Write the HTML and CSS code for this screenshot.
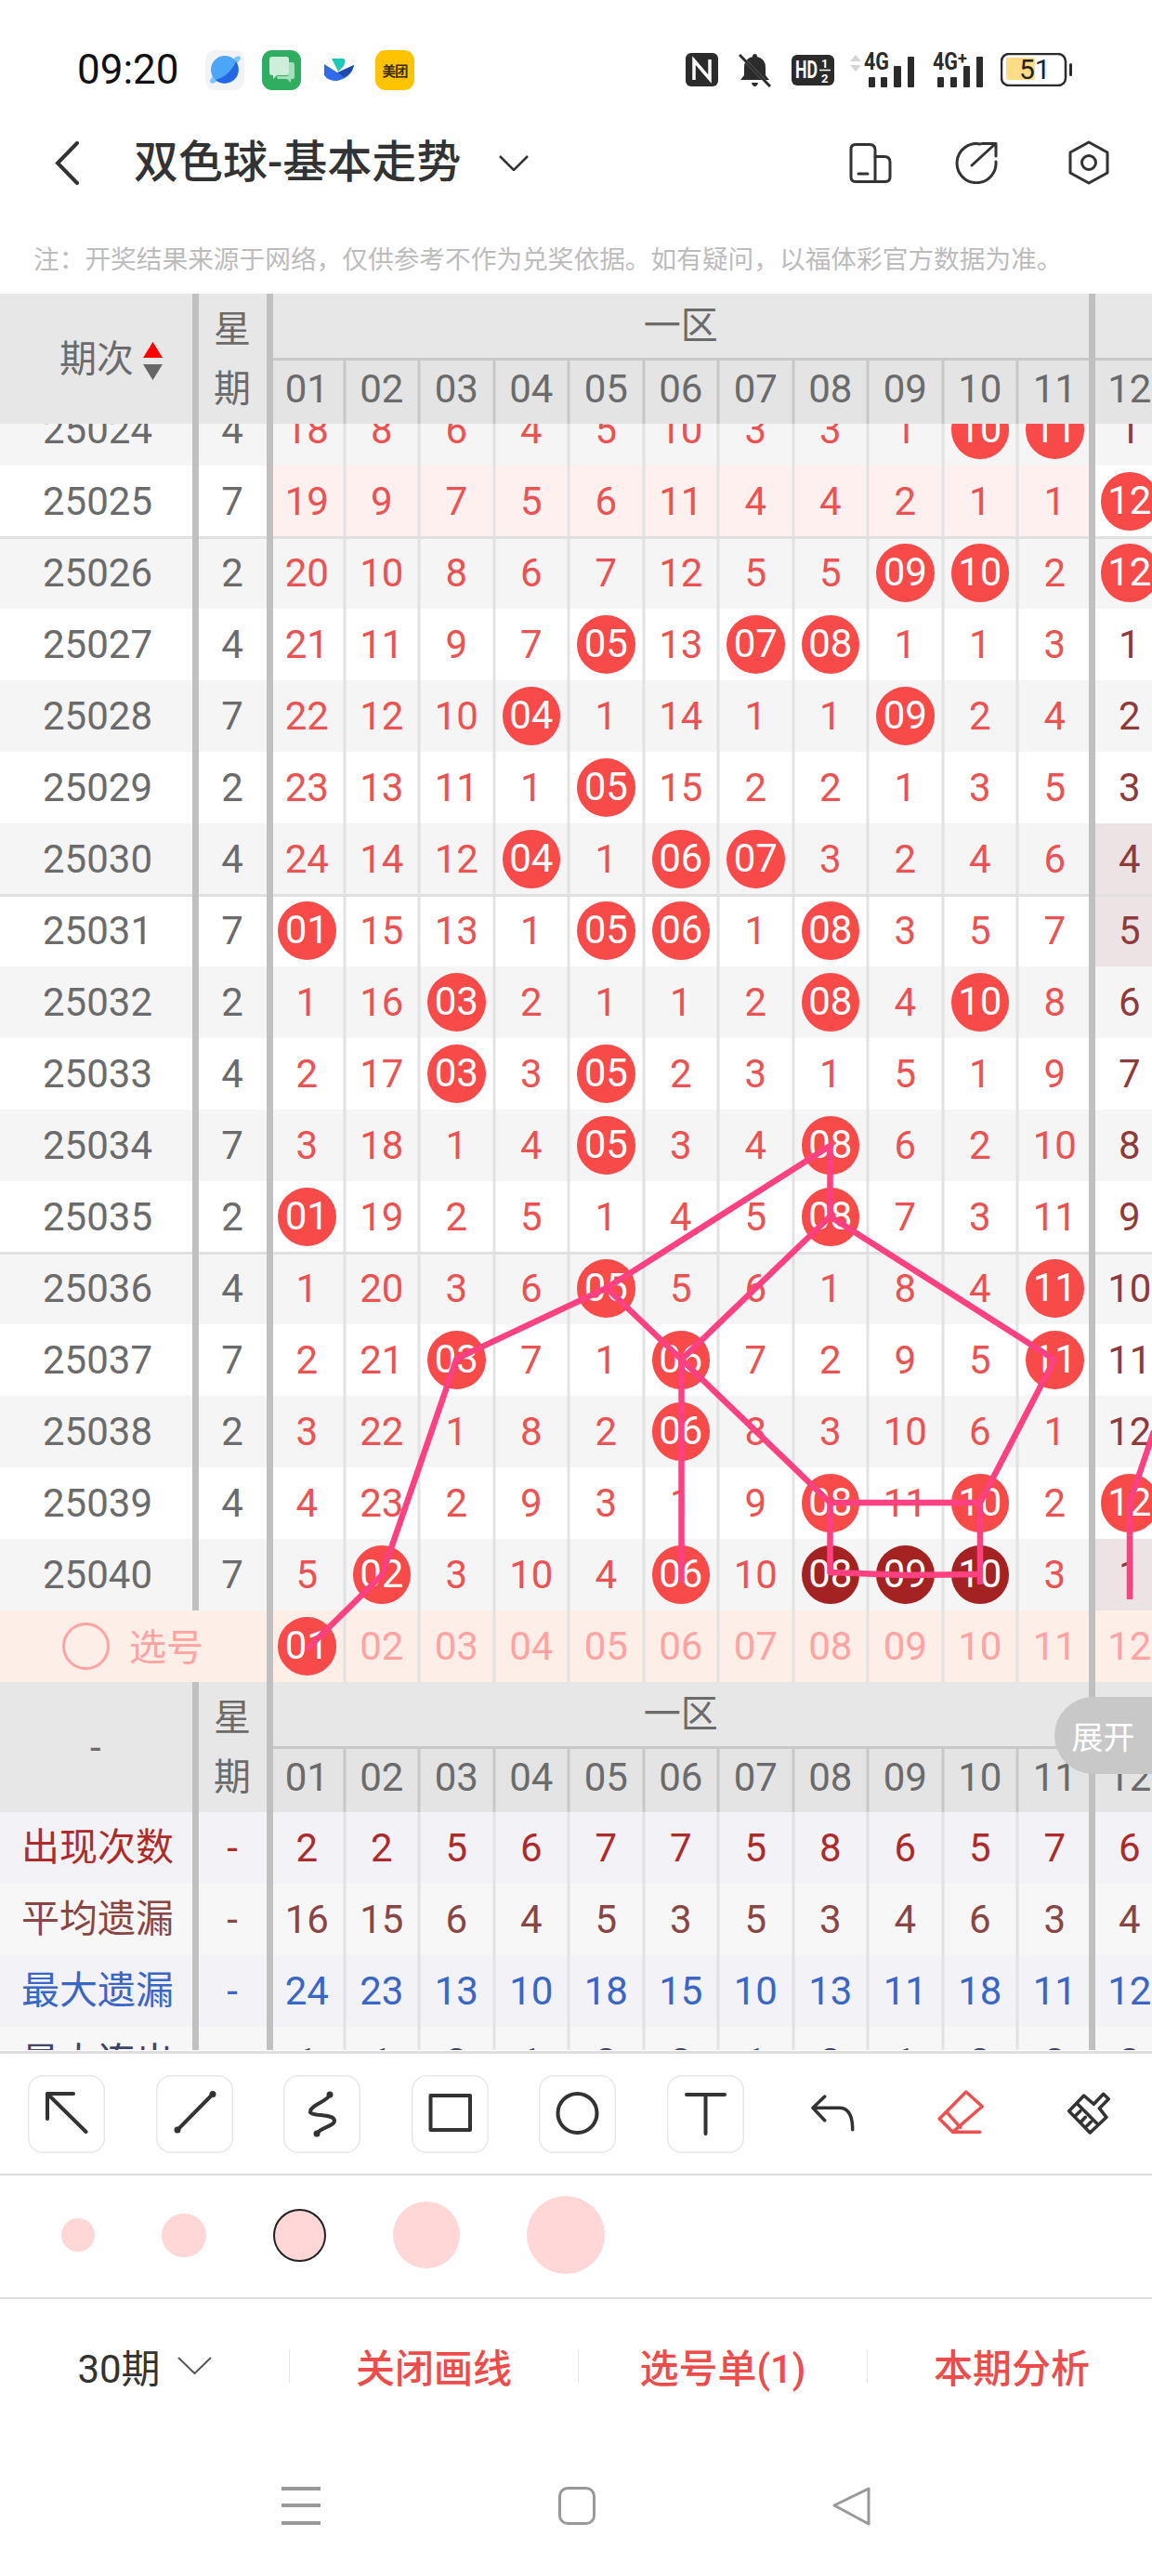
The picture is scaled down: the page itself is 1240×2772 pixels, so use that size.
FILE: index.html
```html
<!DOCTYPE html>
<html lang="zh">
<head>
<meta charset="utf-8">
<title>双色球-基本走势</title>
<link rel="stylesheet" href="styles.css">
</head>
<body>
<div class="status">
  <span class="time">09:20</span>
  <div class="apps">
    <svg class="app" viewBox="0 0 42 43"><rect width="42" height="43" rx="11" fill="#f3f3f6"/><path d="M6 35 Q3 33 9 27 L33 7 Q38 5 38 9 Q36 13 29 19 L13 33 Q8 37 6 35Z" fill="#7cc4fa"/><circle cx="21" cy="21" r="15" fill="#4da6f5"/><path d="M33 12 A15 15 0 0 1 11 32 Q26 28 33 12Z" fill="#2367e6"/></svg>
    <svg class="app" viewBox="0 0 42 43"><rect width="42" height="43" rx="11" fill="#2fae62"/><path d="M8 10 Q8 7 11 7 H26 Q29 7 29 10 V24 Q29 27 26 27 H16 L12 31 V27 H11 Q8 27 8 24Z" fill="#cdeeda"/><path d="M24 13 H32 Q35 13 35 16 V29 Q35 31 32 31 H31 V35 L27 31 H17 Q16 30 16 28 H26 Q29 28 29 24 V13Z" fill="#a3dfbb"/></svg>
    <svg class="bird" viewBox="0 0 32 24"><path d="M8 0 H20 Q24 0 21 8 L15 14 Z" fill="#1fc7b6"/><path d="M0 6 L14 15 L32 7 Q30 20 14 24 Q4 24 0 18Z" fill="#2f6bea"/><path d="M15 15 L32 7 Q30 16 21 20 Z" fill="#1d47a8"/></svg>
    <div class="meituan">美团</div>
  </div>
  <div class="sys">
    <svg class="nfc" viewBox="0 0 35 36"><rect width="35" height="36" rx="6" fill="#2b2b2b"/><path class="cut" d="M9 29 V8 L26 28 V7"/></svg>
    <svg class="bell" viewBox="0 0 35 38"><path d="M17.5 2 Q20 2 20 5 Q29 7 29 17 V25 L33 30 H2 L6 25 V17 Q6 7 15 5 Q15 2 17.5 2Z" fill="#2b2b2b"/><path d="M14 33 H21 Q20 37 17.5 37 Q15 37 14 33Z" fill="#2b2b2b"/><path class="slash-w" d="M3 5 L33 36"/><path class="slash" d="M1 3 L34 37"/></svg>
    <svg class="hd" viewBox="0 0 46 33"><rect width="46" height="33" rx="6" fill="#2b2b2b"/><text class="hd-t" x="4" y="25" textLength="24" lengthAdjust="spacingAndGlyphs">HD</text><text class="hd-s" x="32" y="14">1</text><path class="cut thin" d="M30 16.500 H42"/><text class="hd-s" x="32" y="30">2</text></svg>
    <svg class="sig" viewBox="0 0 69 37"><path d="M0 9 L6 2 L12 9Z" fill="#d6d6d6"/><path d="M0 13 H12 L6 20Z" fill="#d6d6d6"/><text class="sig-t" x="15" y="18" textLength="27" lengthAdjust="spacingAndGlyphs">4G</text><rect x="20" y="26" width="7" height="11" rx="1" fill="#2b2b2b"/><rect x="33" y="26" width="7" height="11" rx="1" fill="#2b2b2b"/><rect x="47" y="14" width="8" height="23" rx="1" fill="#2b2b2b"/><rect x="62" y="4" width="7" height="33" rx="1" fill="#2b2b2b"/></svg>
    <svg class="sig2" viewBox="0 0 54 37"><text class="sig-t" x="0" y="18" textLength="27" lengthAdjust="spacingAndGlyphs">4G</text><text class="sig-p" x="27" y="12">+</text><rect x="5" y="26" width="7" height="11" rx="1" fill="#2b2b2b"/><rect x="19" y="26" width="7" height="11" rx="1" fill="#2b2b2b"/><rect x="33" y="14" width="7" height="23" rx="1" fill="#2b2b2b"/><rect x="47" y="4" width="7" height="33" rx="1" fill="#2b2b2b"/></svg>
    <svg class="batt" viewBox="0 0 78 36"><rect x="1" y="1" width="69" height="34" rx="8" class="batt-o"/><rect x="6" y="5" width="31" height="24" rx="2" fill="#ffdc85"/><text class="batt-t" x="20" y="28">51</text><rect x="74" y="11" width="3" height="14" rx="1.500" fill="#2b2b2b"/></svg>
  </div>
</div>

<div class="appbar">
  <svg class="back" viewBox="0 0 26 47"><path d="M24 2 L3 23.500 L24 45"/></svg>
  <h1 class="title">双色球-基本走势</h1>
  <svg class="drop" viewBox="0 0 32 17"><path d="M1 1 L16 16 L31 1"/></svg>
  <div class="bar-icons">
    <svg class="ic-device" viewBox="0 0 46 43"><path d="M7 1.500 H22 Q28 1.500 28 7.500 V41.500 H7 Q2 41.500 2 36.500 V6.500 Q2 1.500 7 1.500Z"/><path d="M28 14.500 H38 Q44 14.500 44 20.500 V36.500 Q44 41.500 39 41.500 H28"/><path d="M10 33 H20"/></svg>
    <svg class="ic-share" viewBox="0 0 46 46"><path d="M27 3 A21 21 0 1 0 44 22"/><path d="M18 26 L43 3 M29 2.500 H44 V16"/></svg>
    <svg class="ic-gear" viewBox="0 0 44 48"><path d="M22 2 L42 13 V35 L22 46 L2 35 V13Z"/><circle cx="22" cy="24" r="7.500"/></svg>
  </div>
</div>

<p class="note">注&#xFF1A;开奖结果来源于网络&#xFF0C;仅供参考不作为兑奖依据。如有疑问&#xFF0C;以福体彩官方数据为准。</p>

<section class="board">
  <div class="head">
    <div class="h-id h-sort">期次<svg class="sort" viewBox="0 0 21 41"><path d="M10.500 0 L21 17 H0Z" fill="#f00"/><path d="M0 24 H21 L10.500 41Z" fill="#666"/></svg></div>
    <div class="h-wk">星<br>期</div>
    <div class="h-zone">一区</div>
    <div class="h-line"></div>
    <span class="h-n">01</span><span class="h-n">02</span><span class="h-n">03</span><span class="h-n">04</span><span class="h-n">05</span><span class="h-n">06</span><span class="h-n">07</span><span class="h-n">08</span><span class="h-n">09</span><span class="h-n">10</span><span class="h-n">11</span><span class="h-n h-last">12</span>
  </div>
  <div class="rows">
    <div class="row first"><span class="id">25024</span><span class="wk">4</span><span class="n">18</span><span class="n">8</span><span class="n">6</span><span class="n">4</span><span class="n">5</span><span class="n">10</span><span class="n">3</span><span class="n">3</span><span class="n">1</span><span class="n"><i class="ball">10</i></span><span class="n"><i class="ball">11</i></span><span class="n x">1</span></div>
    <div class="row sep hl"><span class="id">25025</span><span class="wk">7</span><span class="n">19</span><span class="n">9</span><span class="n">7</span><span class="n">5</span><span class="n">6</span><span class="n">11</span><span class="n">4</span><span class="n">4</span><span class="n">2</span><span class="n">1</span><span class="n">1</span><span class="n x"><i class="ball">12</i></span></div>
    <div class="row"><span class="id">25026</span><span class="wk">2</span><span class="n">20</span><span class="n">10</span><span class="n">8</span><span class="n">6</span><span class="n">7</span><span class="n">12</span><span class="n">5</span><span class="n">5</span><span class="n"><i class="ball">09</i></span><span class="n"><i class="ball">10</i></span><span class="n">2</span><span class="n x"><i class="ball">12</i></span></div>
    <div class="row"><span class="id">25027</span><span class="wk">4</span><span class="n">21</span><span class="n">11</span><span class="n">9</span><span class="n">7</span><span class="n"><i class="ball">05</i></span><span class="n">13</span><span class="n"><i class="ball">07</i></span><span class="n"><i class="ball">08</i></span><span class="n">1</span><span class="n">1</span><span class="n">3</span><span class="n x">1</span></div>
    <div class="row"><span class="id">25028</span><span class="wk">7</span><span class="n">22</span><span class="n">12</span><span class="n">10</span><span class="n"><i class="ball">04</i></span><span class="n">1</span><span class="n">14</span><span class="n">1</span><span class="n">1</span><span class="n"><i class="ball">09</i></span><span class="n">2</span><span class="n">4</span><span class="n x">2</span></div>
    <div class="row"><span class="id">25029</span><span class="wk">2</span><span class="n">23</span><span class="n">13</span><span class="n">11</span><span class="n">1</span><span class="n"><i class="ball">05</i></span><span class="n">15</span><span class="n">2</span><span class="n">2</span><span class="n">1</span><span class="n">3</span><span class="n">5</span><span class="n x">3</span></div>
    <div class="row sep"><span class="id">25030</span><span class="wk">4</span><span class="n">24</span><span class="n">14</span><span class="n">12</span><span class="n"><i class="ball">04</i></span><span class="n">1</span><span class="n"><i class="ball">06</i></span><span class="n"><i class="ball">07</i></span><span class="n">3</span><span class="n">2</span><span class="n">4</span><span class="n">6</span><span class="n x shade">4</span></div>
    <div class="row"><span class="id">25031</span><span class="wk">7</span><span class="n"><i class="ball">01</i></span><span class="n">15</span><span class="n">13</span><span class="n">1</span><span class="n"><i class="ball">05</i></span><span class="n"><i class="ball">06</i></span><span class="n">1</span><span class="n"><i class="ball">08</i></span><span class="n">3</span><span class="n">5</span><span class="n">7</span><span class="n x shade">5</span></div>
    <div class="row"><span class="id">25032</span><span class="wk">2</span><span class="n">1</span><span class="n">16</span><span class="n"><i class="ball">03</i></span><span class="n">2</span><span class="n">1</span><span class="n">1</span><span class="n">2</span><span class="n"><i class="ball">08</i></span><span class="n">4</span><span class="n"><i class="ball">10</i></span><span class="n">8</span><span class="n x">6</span></div>
    <div class="row"><span class="id">25033</span><span class="wk">4</span><span class="n">2</span><span class="n">17</span><span class="n"><i class="ball">03</i></span><span class="n">3</span><span class="n"><i class="ball">05</i></span><span class="n">2</span><span class="n">3</span><span class="n">1</span><span class="n">5</span><span class="n">1</span><span class="n">9</span><span class="n x">7</span></div>
    <div class="row"><span class="id">25034</span><span class="wk">7</span><span class="n">3</span><span class="n">18</span><span class="n">1</span><span class="n">4</span><span class="n"><i class="ball">05</i></span><span class="n">3</span><span class="n">4</span><span class="n"><i class="ball">08</i></span><span class="n">6</span><span class="n">2</span><span class="n">10</span><span class="n x">8</span></div>
    <div class="row sep"><span class="id">25035</span><span class="wk">2</span><span class="n"><i class="ball">01</i></span><span class="n">19</span><span class="n">2</span><span class="n">5</span><span class="n">1</span><span class="n">4</span><span class="n">5</span><span class="n"><i class="ball">08</i></span><span class="n">7</span><span class="n">3</span><span class="n">11</span><span class="n x">9</span></div>
    <div class="row"><span class="id">25036</span><span class="wk">4</span><span class="n">1</span><span class="n">20</span><span class="n">3</span><span class="n">6</span><span class="n"><i class="ball">05</i></span><span class="n">5</span><span class="n">6</span><span class="n">1</span><span class="n">8</span><span class="n">4</span><span class="n"><i class="ball">11</i></span><span class="n x">10</span></div>
    <div class="row"><span class="id">25037</span><span class="wk">7</span><span class="n">2</span><span class="n">21</span><span class="n"><i class="ball">03</i></span><span class="n">7</span><span class="n">1</span><span class="n"><i class="ball">06</i></span><span class="n">7</span><span class="n">2</span><span class="n">9</span><span class="n">5</span><span class="n"><i class="ball">11</i></span><span class="n x">11</span></div>
    <div class="row"><span class="id">25038</span><span class="wk">2</span><span class="n">3</span><span class="n">22</span><span class="n">1</span><span class="n">8</span><span class="n">2</span><span class="n"><i class="ball">06</i></span><span class="n">8</span><span class="n">3</span><span class="n">10</span><span class="n">6</span><span class="n">1</span><span class="n x">12</span></div>
    <div class="row"><span class="id">25039</span><span class="wk">4</span><span class="n">4</span><span class="n">23</span><span class="n">2</span><span class="n">9</span><span class="n">3</span><span class="n">1</span><span class="n">9</span><span class="n"><i class="ball">08</i></span><span class="n">11</span><span class="n"><i class="ball">10</i></span><span class="n">2</span><span class="n x"><i class="ball">12</i></span></div>
    <div class="row"><span class="id">25040</span><span class="wk">7</span><span class="n">5</span><span class="n"><i class="ball">02</i></span><span class="n">3</span><span class="n">10</span><span class="n">4</span><span class="n"><i class="ball">06</i></span><span class="n">10</span><span class="n"><i class="ball dark">08</i></span><span class="n"><i class="ball dark">09</i></span><span class="n"><i class="ball dark">10</i></span><span class="n">3</span><span class="n x shade">1</span></div>
  </div>
  <div class="pick">
    <div class="pick-lead"><i class="pick-ring"></i><span class="pick-t">选号</span></div>
    <span class="p"><i class="ball">01</i></span><span class="p">02</span><span class="p">03</span><span class="p">04</span><span class="p">05</span><span class="p">06</span><span class="p">07</span><span class="p">08</span><span class="p">09</span><span class="p">10</span><span class="p">11</span><span class="p p-last">12</span>
  </div>
  <i class="rule r-a r-short"></i><i class="rule r-b"></i><i class="rule r-c"></i>
  <svg class="lines" viewBox="0 316 1240 1494">
    <polyline points="330,1775 411,1695 491.500,1462 653,1386 893.500,1233 893.500,1309 1135,1463 1055,1617 1055,1705"/>
    <polyline points="893.500,1309 733.500,1463 733.500,1702"/>
    <polyline points="653,1386 733.500,1463 893.500,1617 1055,1617"/>
    <polyline points="893.500,1617 893.500,1692 975,1695 1055,1694"/>
    <polyline points="1242,1540 1216,1617 1216,1721"/>
  </svg>
</section>

<section class="stats">
  <div class="head">
    <div class="h-id h-dash">-</div>
    <div class="h-wk">星<br>期</div>
    <div class="h-zone">一区</div>
    <div class="h-line"></div>
    <span class="h-n">01</span><span class="h-n">02</span><span class="h-n">03</span><span class="h-n">04</span><span class="h-n">05</span><span class="h-n">06</span><span class="h-n">07</span><span class="h-n">08</span><span class="h-n">09</span><span class="h-n">10</span><span class="h-n">11</span><span class="h-n h-last">12</span>
  </div>
  <div class="stat-rows">
    <div class="row s-count"><span class="id">出现次数</span><span class="wk">-</span><span class="n">2</span><span class="n">2</span><span class="n">5</span><span class="n">6</span><span class="n">7</span><span class="n">7</span><span class="n">5</span><span class="n">8</span><span class="n">6</span><span class="n">5</span><span class="n">7</span><span class="n n-end">6</span></div>
    <div class="row s-avg"><span class="id">平均遗漏</span><span class="wk">-</span><span class="n">16</span><span class="n">15</span><span class="n">6</span><span class="n">4</span><span class="n">5</span><span class="n">3</span><span class="n">5</span><span class="n">3</span><span class="n">4</span><span class="n">6</span><span class="n">3</span><span class="n n-end">4</span></div>
    <div class="row s-max"><span class="id">最大遗漏</span><span class="wk">-</span><span class="n">24</span><span class="n">23</span><span class="n">13</span><span class="n">10</span><span class="n">18</span><span class="n">15</span><span class="n">10</span><span class="n">13</span><span class="n">11</span><span class="n">18</span><span class="n">11</span><span class="n n-end">12</span></div>
    <div class="row s-run"><span class="id">最大连出</span><span class="wk">-</span><span class="n">1</span><span class="n">1</span><span class="n">2</span><span class="n">1</span><span class="n">2</span><span class="n">2</span><span class="n">1</span><span class="n">2</span><span class="n">1</span><span class="n">2</span><span class="n">2</span><span class="n n-end">2</span></div>
  </div>
  <i class="rule r-a"></i><i class="rule r-b"></i><i class="rule r-c"></i>
  <div class="expand">展开</div>
</section>

<div class="tools">
  <div class="tool boxed"><svg viewBox="0 0 83 84"><path d="M49 20 H21 V47 M21 20 L62.500 61"/></svg></div>
  <div class="tool boxed"><svg viewBox="0 0 83 84"><path d="M23 59 L61 20.500"/><circle class="dot" cx="23" cy="59" r="3.500"/><circle class="dot" cx="61" cy="20.500" r="3.500"/></svg></div>
  <div class="tool boxed"><svg viewBox="0 0 83 84"><path d="M50 21 C48 28 30 32 29 39 C28 45 55 41 55 49 C55 55 40 56 36 63"/><circle class="dot" cx="50" cy="21" r="3.500"/><circle class="dot" cx="36" cy="63" r="3.500"/></svg></div>
  <div class="tool boxed"><svg viewBox="0 0 83 84"><path d="M20.500 22 H63 V59 H20.500Z"/></svg></div>
  <div class="tool boxed"><svg viewBox="0 0 83 84"><circle cx="41.500" cy="41" r="21"/></svg></div>
  <div class="tool boxed"><svg viewBox="0 0 83 84"><path d="M21 21 H62 M41.500 21 V63"/></svg></div>
  <div class="tool"><svg class="thin-ic" viewBox="0 0 83 84"><path d="M32.700 23 L20 35.300 L32.700 48.700 M20 35.300 H48.300 Q62.700 35.300 62.700 58.700"/></svg></div>
  <div class="tool"><svg class="thin-ic red" viewBox="0 0 83 84"><path d="M46.800 18 L64.200 33.700 L32.500 61.300 L18.200 47Z M25.800 39.700 L40.800 56.300 M32.500 61.300 H61.800"/></svg></div>
  <div class="tool"><svg class="thin-ic" viewBox="0 0 83 84"><path d="M36.700 22 L47.300 31.300 L57.700 20.300 L63.300 25.700 L53.300 35.700 L61 45.300 L43.300 62 L20.700 38.700Z M30 31.300 L51.700 53 M26.700 44.700 L32.700 38.700 M32.700 51.300 L38.300 45.300 M38.300 56.300 L44.300 50.300"/></svg></div>
</div>

<div class="sizes">
  <i class="dotsize d1"></i><i class="dotsize d2"></i><i class="dotsize d3"></i><i class="dotsize d4"></i><i class="dotsize d5"></i>
</div>

<div class="actions">
  <div class="act act-first">30期<svg class="drop small" viewBox="0 0 37 19"><path d="M1 1 L18.500 18 L36 1"/></svg></div>
  <div class="act red-t">关闭画线</div>
  <div class="act red-t">选号单(1)</div>
  <div class="act red-t">本期分析</div>
</div>

<div class="nav">
  <div class="burger"><i></i><i></i><i></i></div>
  <i class="nav-sq"></i>
  <svg class="nav-tri" viewBox="0 0 42 42"><path d="M2 20 L39 2 V40Z"/></svg>
</div>
</body>
</html>
```

FILE: styles.css
```css
* { box-sizing: border-box; }
html, body { margin: 0; padding: 0; }
body {
  width: 1240px;
  height: 2772px;
  overflow: hidden;
  background: #fff;
  font-family: Roboto, "Noto Sans CJK SC", sans-serif;
  color: #333;
}
i { font-style: normal; display: block; }

/* status bar */
.status { height: 110px; padding: 40px 85px 0 83px; display: flex; align-items: center; }
.time { font-size: 44px; color: #111; width: 138px; letter-spacing: 0; }
.apps { display: flex; align-items: center; }
.app { width: 42px; height: 43px; margin-right: 19px; }
.bird { width: 32px; height: 24px; margin: 0 23px 0 6px; }
.meituan { width: 42px; height: 43px; background: #ffc300; border-radius: 11px; font-size: 14.500px; font-weight: 700; color: #3a2c00; display: flex; align-items: center; justify-content: center; white-space: nowrap; letter-spacing: -1px; }
.sys { margin-left: auto; display: flex; align-items: center; }
.nfc { width: 35px; height: 36px; margin-right: 22px; }
.bell { width: 35px; height: 38px; margin-right: 22px; }
.hd { width: 46px; height: 33px; margin-right: 17px; }
.sig { width: 69px; height: 37px; margin-right: 20px; overflow: visible; }
.sig2 { width: 54px; height: 37px; margin-right: 19px; overflow: visible; }
.batt { width: 78px; height: 36px; }
.cut { fill: none; stroke: #fff; stroke-width: 3.500; }
.thin { stroke-width: 1.500; }
.slash { fill: none; stroke: #2b2b2b; stroke-width: 3; }
.slash-w { fill: none; stroke: #fff; stroke-width: 3; }
.hd-t { font-size: 26px; font-weight: 700; fill: #fff; }
.hd-s { font-size: 13px; font-weight: 700; fill: #fff; }
.sig-t { font-size: 25px; font-weight: 700; fill: #2b2b2b; }
.sig-p { font-size: 18px; font-weight: 700; fill: #2b2b2b; }
.batt-o { fill: none; stroke: #2b2b2b; stroke-width: 2.500; }
.batt-t { font-size: 30px; fill: #222; }

/* app bar */
.appbar { height: 130px; padding-left: 59px; display: flex; align-items: center; }
.back { width: 26px; height: 47px; fill: none; stroke: #333; stroke-width: 4; stroke-linecap: round; }
.title { margin: 0 0 0 59px; font-size: 48px; font-weight: 500; color: #333; line-height: 60px; white-space: nowrap; }
.drop { width: 32px; height: 17px; margin-left: 41px; fill: none; stroke: #333; stroke-width: 2.500; }
.bar-icons { margin-left: auto; display: flex; align-items: center; padding-right: 46px; }
.bar-icons svg { fill: none; stroke: #333; stroke-width: 3; stroke-linejoin: round; stroke-linecap: round; }
.ic-device { width: 46px; height: 43px; margin-right: 68px; }
.ic-share { width: 46px; height: 46px; margin-right: 76px; }
.ic-gear { width: 44px; height: 48px; }

/* note */
.note { margin: 0; height: 76px; padding: 0 0 0 36px; font-size: 27.700px; line-height: 79px; color: #bcbcbc; white-space: nowrap; }

/* chart */
.board, .stats { position: relative; }
.head, .row, .pick {
  display: grid;
  grid-template-columns: 210px 80px repeat(12, 80.500px);
}
.head {
  grid-template-rows: 69px 3px 68px;
  background: #e7e7e7;
  color: #6b6b6b;
  position: relative;
  z-index: 2;
  height: 140px;
}
.h-id { grid-row: 1 / 4; grid-column: 1; font-size: 40px; display: flex; align-items: center; padding-left: 64px; }
.h-sort { padding-bottom: 6px; }
.h-sort .sort { margin-top: 11px; }
.h-dash { font-size: 42px; padding-left: 97px; }
.sort { width: 21px; height: 41px; margin-left: 10px; }
.h-wk { grid-row: 1 / 4; grid-column: 2; font-size: 40px; line-height: 64px; text-align: center; padding-top: 7px; }
.h-zone { grid-row: 1; grid-column: 3 / 14; font-size: 40px; line-height: 70px; text-align: center; }
.h-line { grid-row: 2; grid-column: 3 / 15; background: #c8c8c8; }
.h-n {
  grid-row: 3;
  font-size: 42px;
  line-height: 62px;
  text-align: center;
  background: #e4e4e4;
  box-shadow: inset 1.500px 0 #c8c8c8, -1.500px 0 #c8c8c8;
}
.rows { height: 1277px; overflow: hidden; }
.row { height: 77px; line-height: 77px; font-size: 42px; position: relative; background: #fff; }
.rows .row:nth-child(odd) { background: #f5f5f6; }
.first { margin-top: -32px; }
.sep::after { content: ""; position: absolute; left: 0; right: 0; bottom: -2px; height: 3px; background: #e0e0e0; z-index: 1; }
.id, .wk { text-align: center; color: #6b6b6b; white-space: nowrap; }
.n { display: flex; align-items: center; justify-content: center; color: #ec5252; box-shadow: inset 1.500px 0 #e2e2e2, -1.500px 0 #e2e2e2; }
.hl .n { background: #fff0f0; }
.hl .x { background: #fff; }
.x { color: #8f3b3b; box-shadow: none; }
.shade { background: #ece3e4; }
.ball { width: 62.500px; height: 62.500px; border-radius: 50%; background: #f94a4a; color: #fff; line-height: 62.500px; text-align: center; }
.dark { background: #a52222; }
.pick { height: 77px; background: #feeee8; font-size: 42px; color: #ffa3a3; }
.pick-lead { grid-column: 1 / 3; display: flex; align-items: center; padding-left: 67px; gap: 21px; font-size: 40px; }
.pick-t { padding-bottom: 4px; }
.pick-ring { width: 51px; height: 51px; border: 3px solid #ffa3a3; border-radius: 50%; }
.p { display: flex; align-items: center; justify-content: center; box-shadow: inset 1.500px 0 #e2e2e2, -1.500px 0 #e2e2e2; }
.p-last { box-shadow: none; }
.rule { position: absolute; top: 0; bottom: 0; width: 7px; background: #c0c0c0; z-index: 3; }
.r-a { left: 207px; }
.r-short { bottom: 77px; }
.r-b { left: 287px; }
.r-c { left: 1172px; }
.lines { position: absolute; left: 0; top: 0; width: 1240px; height: 1494px; z-index: 4; fill: none; stroke: #ff4081; stroke-width: 6.500px; stroke-linejoin: round; }

/* stats */
.stat-rows { height: 256px; overflow: hidden; }
.s-count { background: #f2f2f7; }
.s-avg { background: #f7f7f7; }
.s-max { background: #f2f2f7; }
.s-run { background: #f7f7f7; }
.stat-rows .id { font-size: 41px; }
.stat-rows .x, .n-end { box-shadow: none; }
.s-count .id, .s-count .wk, .s-count .n { color: #ae2b2b; }
.s-avg .id, .s-avg .wk, .s-avg .n { color: #8a4545; }
.s-max .id, .s-max .wk, .s-max .n { color: #3a66c6; }
.s-run .id, .s-run .wk, .s-run .n { color: #3f4468; }
.expand { position: absolute; top: 16px; right: 0; width: 105px; height: 83px; border-radius: 41.500px 0 0 41.500px; background: #c8c8c8; color: #fff; font-size: 34px; display: flex; align-items: center; justify-content: center; z-index: 5; }

/* tools */
.tools { margin-top: 1px; height: 132px; border-top: 3px solid #dedede; display: flex; align-items: center; padding-left: 30px; gap: 54.500px; }
.tool { width: 83px; height: 84px; flex: none; }
.boxed { border-radius: 16px; box-shadow: inset 0 0 0 1.500px #e8e8e8; }
.tool svg { display: block; width: 83px; height: 84px; fill: none; stroke: #333; stroke-width: 4; stroke-linecap: round; stroke-linejoin: round; }
.tool .dot { fill: #333; stroke: none; }
.tool .thin-ic { stroke-width: 3.500; }
.tool .red { stroke: #ee4f4f; }
.sizes { height: 132.500px; border-top: 2.500px solid #dedede; display: flex; align-items: center; padding: 0 0 2px 66px; gap: 72px; }
.dotsize { border-radius: 50%; background: #ffd7d7; flex: none; }
.d1 { width: 36px; height: 36px; }
.d2 { width: 47.500px; height: 47.500px; }
.d3 { width: 57px; height: 57px; border: 2px solid #222; }
.d4 { width: 72px; height: 72px; }
.d5 { width: 84px; height: 84px; }
.actions { height: 146px; border-top: 2px solid #dedede; display: flex; align-items: center; }
.act { flex: 0 0 311px; height: 36px; display: flex; align-items: center; justify-content: center; font-size: 42px; white-space: nowrap; border-left: 1.500px solid #e6e6e6; }
.act-first { border-left: 0; gap: 18px; padding-left: 0; }
.act-first .drop { width: 37px; height: 19px; margin: 0; stroke: #555; stroke-width: 2; }
.red-t { color: #ee4b4b; font-size: 42px; font-weight: 500; }
.nav { height: 155px; padding-top: 58px; display: flex; align-items: flex-start; }
.burger { margin-left: 303px; width: 42px; height: 41px; display: flex; flex-direction: column; justify-content: space-between; }
.burger i { height: 4px; background: #999; }
.nav-sq { margin-left: 256px; width: 40px; height: 41px; border: 3px solid #999; border-radius: 10px; }
.nav-tri { margin-left: 255px; width: 42px; height: 42px; fill: none; stroke: #999; stroke-width: 3; stroke-linejoin: round; }
```
